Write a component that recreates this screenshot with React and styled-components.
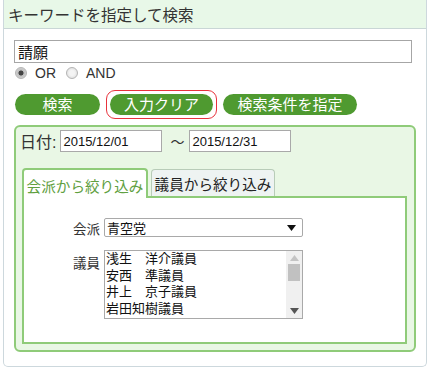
import React from "react";
import styled, { createGlobalStyle } from "styled-components";

const Global = createGlobalStyle`
  html, body { margin: 0; padding: 0; background: #fff; }
  body { font-family: "Liberation Sans", "Noto Sans CJK JP", sans-serif; color: #333; }
  * { box-sizing: border-box; }
`;

const JP = `"Liberation Sans", "Noto Sans CJK JP", sans-serif`;

const Page = styled.div`
  padding: 0 3px;
`;

const Panel = styled.section`
  width: 424px;
  border: 1px solid #cdd8dd;
  border-top: none;
  border-radius: 0 0 5px 5px;
  background: #fff;
`;

const Header = styled.header`
  height: 29px;
  background: #e8f8e8;
  border-bottom: 1px solid #c9d6d6;
  display: flex;
  align-items: center;
  padding-left: 4px;
  font-family: ${JP};
  font-size: 15.5px;
  color: #333;
`;

const Body = styled.div`
  padding: 11px 11px 14px 10px;
  display: flex;
  flex-direction: column;
`;

const KeywordInput = styled.div`
  width: 398px;
  height: 23px;
  border: 1px solid #a6a6a6;
  display: flex;
  align-items: center;
  padding-left: 3px;
  font-family: ${JP};
  font-size: 15px;
  color: #111;
`;

const RadioRow = styled.div`
  display: flex;
  align-items: center;
  height: 18px;
  margin-top: 1px;
  padding-left: 1px;
`;

const RadioLabel = styled.label`
  display: flex;
  align-items: center;
  font-family: "Liberation Sans", sans-serif;
  font-size: 14px;
  color: #333;
  margin-right: 10px;
`;

const RadioDot = styled.span`
  width: 12px;
  height: 12px;
  border-radius: 50%;
  border: 1px solid #b4b4b4;
  margin-right: 8px;
  background: ${(p) =>
    p.$checked
      ? "radial-gradient(circle, #444 0 2.2px, #bdbdbd 2.8px, #e2e2e2 100%)"
      : "radial-gradient(circle, #f4f4f4 0 2.5px, #d6d6d6 100%)"};
`;

const ButtonRow = styled.div`
  display: flex;
  align-items: center;
  gap: 10px;
  margin-top: 12px;
  padding-left: 1px;
`;

const FocusRing = styled.span`
  display: flex;
  padding: 3px;
  margin: -4px -4px;
  border: 1px solid #e8323c;
  border-radius: 9px;
`;

const Pill = styled.button`
  width: ${(p) => p.$w}px;
  height: 21px;
  border: none;
  border-radius: 11px;
  background: #4f9a30;
  color: #fff;
  font-family: ${JP};
  font-size: 15px;
  line-height: 21px;
  padding: 0;
  display: flex;
  align-items: center;
  justify-content: center;
`;

const DatePanel = styled.div`
  margin-top: 10px;
  width: 402px;
  border: 2px solid #8fcb79;
  border-radius: 6px;
  background: #e9f7e5;
  padding: 3px 7px 6px 4px;
`;

const DateRow = styled.div`
  display: flex;
  align-items: center;
  height: 22px;
  font-family: ${JP};
  font-size: 16px;
  color: #333;
`;

const DateLabel = styled.span`
  margin-right: 4px;
`;

const DateField = styled.div`
  width: 102px;
  height: 22px;
  border: 1px solid #a9a9a9;
  background: #fff;
  display: flex;
  align-items: center;
  padding-left: 2px;
  font-family: "Liberation Sans", sans-serif;
  font-size: 13px;
  color: #111;
`;

const Tilde = styled.span`
  margin: 0 4px 0 7px;
  width: 16px;
  text-align: center;
  font-size: 14px;
`;

const TabArea = styled.div`
  margin: 16px 0 0 2px;
`;

const TabRow = styled.div`
  display: flex;
  align-items: flex-end;
  gap: 3px;
  position: relative;
  z-index: 1;
  margin-bottom: -2px;
`;

const Tab = styled.div`
  height: ${(p) => (p.$active ? 30 : 27)}px;
  width: ${(p) => p.$w}px;
  border: ${(p) => (p.$active ? "2px solid #8fcb79" : "1px solid #b8ccb8")};
  border-bottom: none;
  border-radius: 4px 4px 0 0;
  background: ${(p) => (p.$active ? "#fff" : "#eef3f2")};
  color: ${(p) => (p.$active ? "#5fa03f" : "#222")};
  font-family: ${JP};
  font-size: 14.6px;
  display: flex;
  align-items: ${(p) => (p.$active ? "flex-start" : "center")};
  padding-top: ${(p) => (p.$active ? 5 : 0)}px;
  justify-content: center;
  margin-bottom: ${(p) => (p.$active ? 0 : 2)}px;
`;

const TabContent = styled.div`
  height: 148px;
  border: 2px solid #8fcb79;
  background: #fff;
  padding-top: 20px;
`;

const FormGrid = styled.div`
  display: grid;
  grid-template-columns: 76px 199px;
  column-gap: 4px;
  row-gap: 11px;
  align-items: start;
`;

const FieldLabel = styled.span`
  text-align: right;
  font-family: ${JP};
  font-size: 13.5px;
  color: #333;
  line-height: 19px;
  padding-top: ${(p) => p.$pt || 0}px;
`;

const SelectBox = styled.div`
  height: 19px;
  border: 1px solid #a9a9a9;
  border-radius: 2px;
  display: flex;
  align-items: center;
  justify-content: space-between;
  padding: 0 6px 0 2px;
  font-family: ${JP};
  font-size: 13px;
  color: #111;
`;

const ListBox = styled.div`
  height: 69px;
  border: 1px solid #a9a9a9;
  display: flex;
`;

const ListItems = styled.div`
  flex: 1;
  padding: 0 0 0 1px;
  font-family: ${JP};
  font-size: 13px;
  line-height: 16.5px;
  color: #111;
  white-space: pre;
  overflow: hidden;
`;

const ListItem = styled.div`
  height: 16.5px;
`;

const Scrollbar = styled.div`
  width: 16px;
  background: #f0f0f0;
  display: flex;
  flex-direction: column;
  align-items: center;
  padding: 4px 0 4px;
`;

const Thumb = styled.div`
  width: 12px;
  height: 17px;
  background: #c1c1c1;
  margin-top: 3px;
`;

const Spacer = styled.div`
  flex: 1;
`;

const Tri = ({ dir, color }) => (
  <svg width="9" height="6" viewBox="0 0 9 6">
    <polygon points={dir === "up" ? "4.5,0 9,6 0,6" : "0,0 9,0 4.5,6"} fill={color} />
  </svg>
);

const members = ["浅生　洋介議員", "安西　準議員", "井上　京子議員", "岩田知樹議員"];

export default function App() {
  return (
    <Page>
      <Global />
      <Panel>
        <Header>キーワードを指定して検索</Header>
        <Body>
          <KeywordInput>請願</KeywordInput>
          <RadioRow>
            <RadioLabel>
              <RadioDot $checked />
              OR
            </RadioLabel>
            <RadioLabel>
              <RadioDot />
              AND
            </RadioLabel>
          </RadioRow>
          <ButtonRow>
            <Pill $w={85}>検索</Pill>
            <FocusRing>
              <Pill $w={103}>入力クリア</Pill>
            </FocusRing>
            <Pill $w={134}>検索条件を指定</Pill>
          </ButtonRow>
          <DatePanel>
            <DateRow>
              <DateLabel>日付:</DateLabel>
              <DateField>2015/12/01</DateField>
              <Tilde>〜</Tilde>
              <DateField>2015/12/31</DateField>
            </DateRow>
            <TabArea>
              <TabRow>
                <Tab $active $w={126}>会派から絞り込み</Tab>
                <Tab $w={124}>議員から絞り込み</Tab>
              </TabRow>
              <TabContent>
                <FormGrid>
                  <FieldLabel $pt={2}>会派</FieldLabel>
                  <SelectBox>
                    <span>青空党</span>
                    <Tri dir="down" color="#111" />
                  </SelectBox>
                  <FieldLabel $pt={4}>議員</FieldLabel>
                  <ListBox>
                    <ListItems>
                      {members.map((m) => (
                        <ListItem key={m}>{m}</ListItem>
                      ))}
                    </ListItems>
                    <Scrollbar>
                      <Tri dir="up" color="#c4c4c4" />
                      <Thumb />
                      <Spacer />
                      <Tri dir="down" color="#555" />
                    </Scrollbar>
                  </ListBox>
                </FormGrid>
              </TabContent>
            </TabArea>
          </DatePanel>
        </Body>
      </Panel>
    </Page>
  );
}
